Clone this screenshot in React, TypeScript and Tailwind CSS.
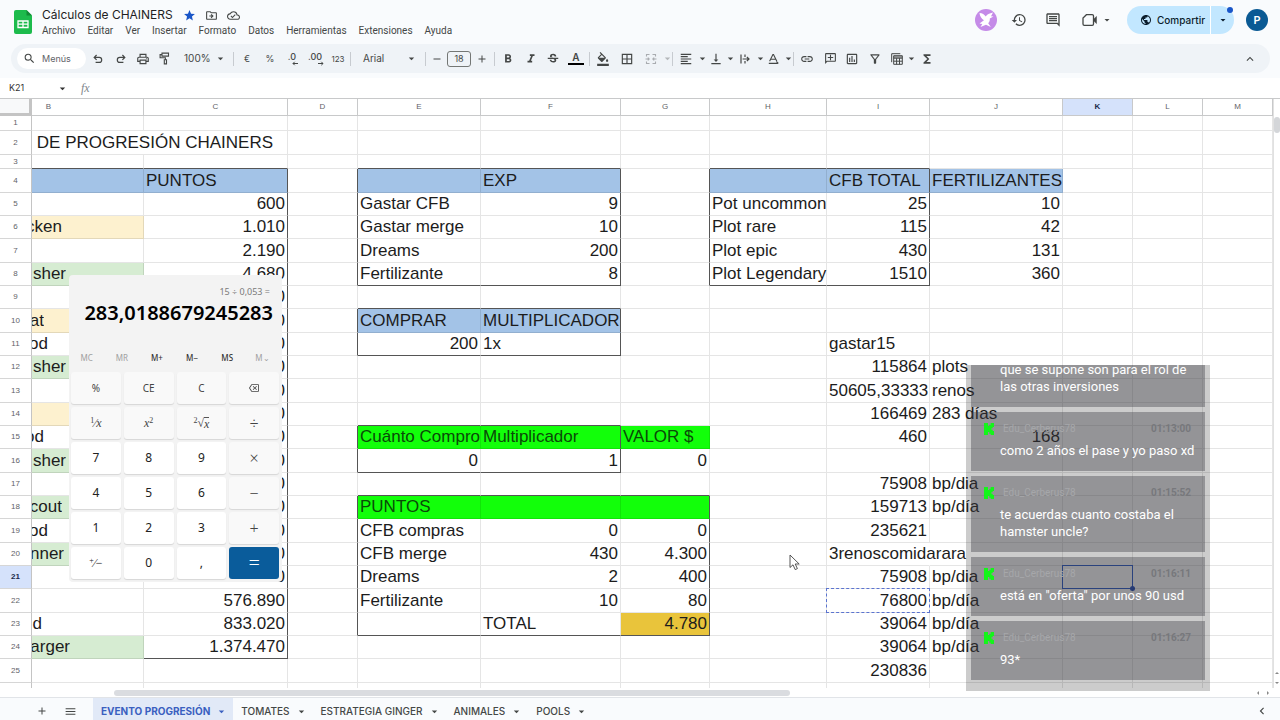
import { type ReactNode } from "react";
import {
  MdSearch, MdOutlinePrint, MdFormatBold, MdFormatItalic, MdStrikethroughS, MdFormatColorFill,
  MdBorderAll, MdFormatAlignLeft, MdVerticalAlignBottom, MdLink, MdOutlineAddComment,
  MdOutlineInsertChart, MdFunctions, MdHistory, MdOutlineComment, MdPublic,
  MdStar, MdOutlineDriveFileMove, MdOutlineCloudDone, MdArrowDropDown, MdAdd, MdRemove, MdMenu,
  MdKeyboardArrowUp, MdKeyboardArrowLeft, MdOutlineFilterAlt, MdOutlineBackspace,
} from "react-icons/md";

const COLS = ["B", "C", "D", "E", "F", "G", "H", "I", "J", "K", "L", "M"];
const COL_W = [
  "w-[112px]", "w-[144px]", "w-[70px]", "w-[123px]", "w-[140px]", "w-[89px]",
  "w-[117px]", "w-[103px]", "w-[133px]", "w-[70px]", "w-[70px]", "",
];
const ROWS = Array.from({ length: 26 }, (_, i) => i + 1);

const rowHeight = (n: number) =>
  n === 1 ? "h-[15px]" : n === 3 ? "h-[14px]" : n === 2 || n % 3 === 1 ? "h-[24px]" : "h-[23px]";

/* Text that starts with "<" is left aligned, everything else sits on the right */
const CELLS: Record<string, string> = {
  C4: "<PUNTOS", C5: "600", C6: "1.010", C7: "2.190", C8: "4.680",
  C9: "0", C10: "0", C11: "0", C12: "0", C13: "0", C14: "0", C15: "0", C16: "0",
  C17: "0", C18: "0", C19: "0", C20: "0", C21: "0",
  C22: "576.890", C23: "833.020", C24: "1.374.470",
  F4: "<EXP", E5: "<Gastar CFB", F5: "9", E6: "<Gastar merge", F6: "10",
  E7: "<Dreams", F7: "200", E8: "<Fertilizante", F8: "8",
  E10: "<COMPRAR", F10: "<MULTIPLICADOR", E11: "200", F11: "<1x",
  E15: "<Cuánto Compro", F15: "<Multiplicador", G15: "<VALOR $", E16: "0", F16: "1", G16: "0",
  E18: "<PUNTOS", E19: "<CFB compras", F19: "0", G19: "0", E20: "<CFB merge", F20: "430", G20: "4.300",
  E21: "<Dreams", F21: "2", G21: "400", E22: "<Fertilizante", F22: "10", G22: "80",
  F23: "<TOTAL", G23: "4.780",
  I4: "<CFB TOTAL", J4: "<FERTILIZANTES", H5: "<Pot uncommon", I5: "25", J5: "10",
  H6: "<Plot rare", I6: "115", J6: "42", H7: "<Plot epic", I7: "430", J7: "131",
  H8: "<Plot Legendary", I8: "1510", J8: "360",
  I11: "<gastar15", I12: "115864", J12: "<plots", I13: "50605,33333", J13: "<renos",
  I14: "166469", J14: "<283 días", I15: "460", J15: "168",
  I17: "75908", J17: "<bp/dia", I18: "159713", J18: "<bp/día", I19: "235621",
  I20: "<3renoscomidarara", I21: "75908", J21: "<bp/dia", I22: "76800", J22: "<bp/día",
  I23: "39064", J23: "<bp/día", I24: "39064", J24: "<bp/día", I25: "230836",
};

/* Column B is scrolled under the row headers: text and the width still in view */
const TAILS: Record<number, [string, string]> = {
  6: ["cken", "w-[30px]"], 8: ["sher", "w-[34px]"], 10: ["at", "w-[12px]"], 11: ["od", "w-[16px]"],
  12: ["sher", "w-[34px]"], 15: ["od", "w-[12px]"], 16: ["sher", "w-[34px]"], 18: ["cout", "w-[30px]"],
  19: ["od", "w-[16px]"], 20: ["nner", "w-[32px]"], 23: ["d", "w-[10px]"], 24: ["arger", "w-[38px]"],
};

const inRanges = (ranges: string[], col: string, row: number) =>
  ranges.some((r) => {
    const m = /^([A-Z])(\d+):([A-Z])(\d+)$/.exec(r)!;
    return col >= m[1] && col <= m[3] && row >= +m[2] && row <= +m[4];
  });

const DARK_RIGHT = [
  "C4:C24", "D4:D8", "F4:F8", "D10:D11", "F10:F11", "D15:D16", "F15:F16",
  "D18:D23", "G18:G23", "G4:G8", "I4:I8",
];
const DARK_BOTTOM = [
  "B3:C3", "C24:C24", "E3:F3", "E8:F8", "E9:F9", "E11:F11", "E14:F14", "E16:F16",
  "E17:G17", "E23:G23", "H3:I3", "H8:I8",
];
const FILLS: [string, string[]][] = [
  ["bg-[#a3c3e7]", ["B4:C4", "E4:F4", "H4:J4", "E10:F10"]],
  ["bg-[#12ff0a] text-[#0a4a08]", ["E15:G15", "E18:G18"]],
  ["bg-[#e9c43b]", ["G23:G23"]],
  ["bg-[#fdf1cf]", ["B6:B6", "B10:B10", "B14:B14"]],
  ["bg-[#d6ecd2]", ["B8:B8", "B12:B12", "B16:B16", "B18:B18", "B20:B20", "B24:B24"]],
];

function Cell({ col, row }: { col: string; row: number }) {
  if (row === 2 && col === "C") return null;
  const raw = CELLS[col + row] ?? "";
  const left = raw.startsWith("<");
  const fill = FILLS.find(([, r]) => inRanges(r, col, row))?.[0] ?? "";
  const right = inRanges(DARK_RIGHT, col, row)
    ? "border-r-[#555]"
    : col + row === "I20" ? "border-r-transparent" : "border-r-black/10";
  const bottom = inRanges(DARK_BOTTOM, col, row) ? "border-b-[#555]" : "border-b-black/10";
  const base = `relative whitespace-nowrap border-r border-b p-0 ${right} ${bottom} ${fill}`;

  if (row === 2 && col === "B")
    return (
      <td colSpan={2} className={base}>
        <div className="flex justify-end overflow-hidden pr-[14px]">S DE PROGRESIÓN CHAINERS</div>
      </td>
    );
  if (col === "B" && TAILS[row]) {
    const [text, width] = TAILS[row];
    return (
      <td className={base}>
        <div className={`flex justify-end overflow-hidden ${width}`}>{text}</div>
      </td>
    );
  }
  return (
    <td className={`${base} ${left ? "text-left" : "text-right"}`}>
      {raw && <div className="px-[2px]">{left ? raw.slice(1) : raw}</div>}
      {col + row === "K21" && (
        <>
          <span className="absolute -inset-px border border-[#2456c8]" />
          <span className="absolute -right-[3px] -bottom-[3px] size-[5px] rounded-full bg-[#1b46b8]" />
        </>
      )}
      {col + row === "I22" && <span className="absolute -inset-px border border-dashed border-[#5b74d0]" />}
    </td>
  );
}

function Grid() {
  return (
    <table className="w-full table-fixed border-separate border-spacing-0 text-[17px] leading-[20px] text-[#1c1c1c]">
      <colgroup>
        <col className="w-8" />
        {COLS.map((c, i) => <col key={c} className={COL_W[i]} />)}
      </colgroup>
      <thead>
        <tr className="h-[17px] text-[8px] leading-[10px] text-[#5f6368]">
          <th className="border-r-3 border-b-3 border-[#c4c4c4] bg-[#f8f9fa] p-0" aria-label="Seleccionar todo" />
          {COLS.map((c, i) => (
            <th
              key={c}
              className={`border-r border-b border-[#c8c9ca] p-0 text-center ${i === 0 ? "pr-[78px]" : ""} ${
                c === "K" ? "bg-[#d5e2fb] font-bold text-[#1b2b4a]" : "font-normal"
              }`}
            >
              {c}
            </th>
          ))}
        </tr>
      </thead>
      <tbody>
        {ROWS.map((r) => (
          <tr key={r} className={rowHeight(r)}>
            <th
              className={`border-r border-b border-r-[#c4c4c4] border-b-[#d6d6d6] p-0 text-center text-[8px] leading-[10px] ${
                r === 21 ? "bg-[#d5e2fb] font-bold text-[#1b2b4a]" : "font-normal text-[#5f6368]"
              }`}
            >
              {r}
            </th>
            {COLS.map((c) => <Cell key={c} col={c} row={r} />)}
          </tr>
        ))}
      </tbody>
    </table>
  );
}

function Tool({ w = "w-[22px]", label, children, className = "" }: {
  w?: string; label: string; children: ReactNode; className?: string;
}) {
  return (
    <button aria-label={label} className={`flex h-5 shrink-0 items-center justify-center ${w} ${className}`}>
      {children}
    </button>
  );
}

const Sep = () => <span className="mx-px h-[14px] w-px shrink-0 bg-[#c7cbd0]" />;
const Caret = ({ label, w = "w-2", dim = false }: { label: string; w?: string; dim?: boolean }) => (
  <Tool w={w} label={label} className={dim ? "text-[#b4b7ba]" : ""}>
    <MdArrowDropDown className="size-[13px] shrink-0" />
  </Tool>
);

const UndoIcon = ({ className = "" }: { className?: string }) => (
  <svg viewBox="0 0 12 12" className={`size-3 ${className}`} fill="none" stroke="currentColor" strokeWidth="1.2">
    <path d="M4.6 2 2.2 4.4l2.4 2.4M2.4 4.4h4.8a2.5 2.5 0 0 1 0 5H3.6" />
  </svg>
);
const RollerIcon = () => (
  <svg viewBox="0 0 12 13" className="h-[13px] w-3" fill="none" stroke="currentColor" strokeWidth="1.1">
    <path d="M3 1.1h6.5v3H3zM3 2.6H1.1v3.2h5.3v1.8M5.3 7.7h2.2v4.2H5.3z" />
  </svg>
);
const DecimalIcon = ({ text, add }: { text: string; add?: boolean }) => (
  <span className="relative flex h-[14px] flex-col items-center text-[9px] leading-[10px] font-medium">
    {text}
    <svg viewBox="0 0 6 5" className="absolute right-[-2px] bottom-0 h-[5px] w-[6px]" fill="none" stroke="currentColor">
      <path d={add ? "M0 2.5h5M3.3.8 5 2.5 3.3 4.2" : "M6 2.5H1M2.7.8 1 2.5l1.7 1.7"} />
    </svg>
  </span>
);
const MergeIcon = () => (
  <svg viewBox="0 0 12 12" className="size-3 text-[#a9acb0]" fill="none" stroke="currentColor" strokeWidth="1.1">
    <path d="M4.5 1.5h-3v2M7.5 1.5h3v2M4.5 10.5h-3v-2M7.5 10.5h3v-2M.5 6H4M2.8 4.6 4.2 6 2.8 7.4M11.5 6H8M9.2 4.6 7.8 6l1.4 1.4" />
  </svg>
);
const WrapIcon = () => (
  <svg viewBox="0 0 12 12" className="size-3" fill="none" stroke="currentColor" strokeWidth="1.2">
    <path d="M2 1.5v9M6 1.5v2.6M6 7.9v2.6M3.6 6h6M7.9 4 10 6 7.9 8" />
  </svg>
);
const RotateIcon = () => (
  <svg viewBox="0 0 12 12" className="size-3" fill="none" stroke="currentColor" strokeWidth="1.1">
    <path d="M1.6 8.3 4.9 1.6h.6l3.3 6.7M2.8 6.2h4.8M.8 10.4h9M8.5 8.6l1.9 1.8" />
  </svg>
);
const TableIcon = () => (
  <svg viewBox="0 0 12 12" className="size-3" fill="none" stroke="currentColor">
    <path d="M.7 9.2V.7h8.6M2.7 2.7h8.6v8.6H2.7zM2.7 4h8.6M2.7 5.2h8.6M2.7 8.2h8.6M5.6 5.2v6.1M8.5 5.2v6.1" />
  </svg>
);
const VideoIcon = () => (
  <svg viewBox="0 0 16 14" className="h-[14px] w-4" fill="none" stroke="currentColor" strokeWidth="1.3">
    <path d="M4.400 1.700h5.800a1.300 1.300 0 0 1 1.300 1.300v8a1.300 1.300 0 0 1-1.300 1.300H2.300A1.300 1.300 0 0 1 1 11V5.100z" />
    <path d="m11.800 6 2.700-2.600v7.200L11.800 8z" fill="currentColor" strokeWidth="0.500" />
  </svg>
);
const SheetsLogo = () => (
  <svg viewBox="0 0 18 24" className="h-6 w-[18px]">
    <path d="M2 0h10.5L18 5.5V22a2 2 0 0 1-2 2H2a2 2 0 0 1-2-2V2a2 2 0 0 1 2-2z" fill="#1dbb4c" />
    <path d="M12.5 0 18 5.5h-5.5z" fill="#128a35" />
    <path d="M4 11h10v6.5H4zM4 14.2h10M9 11v6.5" fill="none" stroke="#fff" strokeWidth="1.3" />
  </svg>
);
const BirdAvatar = () => (
  <svg viewBox="0 0 22 22" className="size-[22px]">
    <circle cx="11" cy="11" r="11" fill="#c58be8" />
    <path d="M4.500 4c2.800.2 5 1.500 6.300 3.600 1.200-2.200 3.600-2.900 7.200-4l-2 3.600 2.500.3-3.700 2.100c.2 2.200-.5 3.600-1.600 4.700l2.600 3.700-4.800-2.300-5.500 2.300 1.800-3-2.800-.5 4.500-3.300C6.500 9.700 4.800 7.300 4.500 4z" fill="#fff" />
  </svg>
);

const MENUS = ["Archivo", "Editar", "Ver", "Insertar", "Formato", "Datos", "Herramientas", "Extensiones", "Ayuda"];

function Header() {
  return (
    <header className="flex h-11 shrink-0 items-start pr-3 pl-[14px] text-[#444746]">
      <a href="#inicio" aria-label="Hojas de cálculo" className="mt-[10px]"><SheetsLogo /></a>
      <div className="ml-[10px] flex-1 pt-[7px]">
        <div className="flex h-4 items-center">
          <h1 className="text-[12px] leading-4 text-[#1f1f1f]">Cálculos de CHAINERS</h1>
          <button aria-label="Destacar" className="ml-[10px]"><MdStar className="size-[13px] text-[#1a56c8]" /></button>
          <button aria-label="Mover" className="ml-[9px]"><MdOutlineDriveFileMove className="size-[13px]" /></button>
          <button aria-label="Guardado" className="ml-[9px]"><MdOutlineCloudDone className="size-[13px]" /></button>
        </div>
        <nav className="flex h-4 items-center gap-3 font-[Roboto,sans-serif] text-[10px] leading-4">
          {MENUS.map((m) => <button key={m}>{m}</button>)}
        </nav>
      </div>
      <div className="flex h-10 items-center">
        <button aria-label="Colaborador"><BirdAvatar /></button>
        <button aria-label="Historial" className="flex w-11 justify-center"><MdHistory className="size-4" /></button>
        <button aria-label="Comentarios" className="flex w-6 justify-center"><MdOutlineComment className="size-4" /></button>
        <button aria-label="Videollamada" className="flex w-[48px] items-center justify-end gap-[3px]">
          <VideoIcon />
          <MdArrowDropDown className="size-3" />
        </button>
        <div className="relative ml-[14px] flex h-7 overflow-visible rounded-full bg-[#c2e7ff] text-[#0b1d2c]">
          <button className="flex w-[83px] items-center gap-[5px] pl-[13px] text-[10px] font-medium">
            <MdPublic className="size-3 shrink-0" />Compartir
          </button>
          <button aria-label="Opciones para compartir" className="flex w-6 items-center justify-center border-l border-white">
            <MdArrowDropDown className="size-3" />
          </button>
          <span className="absolute top-px right-px size-[6px] rounded-full bg-[#1a56c8]" />
        </div>
        <button className="ml-3 size-[22px] rounded-full bg-[#0b5a94] text-[11px] font-semibold text-white">P</button>
      </div>
    </header>
  );
}

function Toolbar() {
  const i = "size-[14px]";
  return (
    <div className="mr-[10px] mb-[5px] ml-[11px] flex h-[29px] shrink-0 items-center rounded-full bg-[#eff3f7] pl-[6px] text-[9px] text-[#444746]">
      <label className="flex h-[21px] w-[69px] shrink-0 items-center gap-[6px] rounded-full bg-white pl-[6px]">
        <MdSearch className="size-[13px] shrink-0" />
        <input aria-label="Menús" placeholder="Menús" className="w-9 outline-none placeholder:text-[#5f6368]" />
      </label>
      <Tool w="w-6" label="Deshacer"><UndoIcon /></Tool>
      <Tool label="Rehacer"><UndoIcon className="-scale-x-100" /></Tool>
      <Tool label="Imprimir"><MdOutlinePrint className={i} /></Tool>
      <Tool label="Copiar formato"><RollerIcon /></Tool>
      <button className="flex w-14 shrink-0 items-center justify-between pr-[5px] pl-2 text-[10px]">
        100%<MdArrowDropDown className="size-[13px]" />
      </button>
      <Sep />
      <Tool w="w-6" label="Moneda">€</Tool>
      <Tool label="Porcentaje">%</Tool>
      <Tool label="Menos decimales"><DecimalIcon text=".0" /></Tool>
      <Tool w="w-6" label="Más decimales"><DecimalIcon text=".00" add /></Tool>
      <Tool label="Más formatos" className="text-[8px]">123</Tool>
      <Sep />
      <button className="flex w-[72px] shrink-0 items-center justify-between pr-[6px] pl-[11px] text-[10px]">
        Arial<MdArrowDropDown className="size-[13px]" />
      </button>
      <Sep />
      <Tool w="w-5" label="Reducir"><MdRemove className="size-3" /></Tool>
      <input
        aria-label="Tamaño de fuente"
        defaultValue="18"
        className="h-4 w-6 shrink-0 rounded-[3px] border border-[#747775] text-center text-[9px] outline-none"
      />
      <Tool label="Aumentar"><MdAdd className="size-3" /></Tool>
      <Sep />
      <Tool w="w-6" label="Negrita"><MdFormatBold className={i} /></Tool>
      <Tool label="Cursiva"><MdFormatItalic className={i} /></Tool>
      <Tool label="Tachado"><MdStrikethroughS className={i} /></Tool>
      <Tool w="w-6" label="Color del texto">
        <span className="flex w-4 flex-col items-center border-b-2 border-black text-[10px] leading-[11px] font-semibold">A</span>
      </Tool>
      <Sep />
      <Tool w="w-6" label="Color de relleno"><MdFormatColorFill className={i} /></Tool>
      <Tool w="w-6" label="Bordes"><MdBorderAll className={i} /></Tool>
      <Tool w="w-6" label="Combinar celdas"><MergeIcon /></Tool>
      <Caret label="Opciones de combinar" dim />
      <Sep />
      <Tool w="w-6" label="Alineación horizontal"><MdFormatAlignLeft className={i} /></Tool>
      <Caret label="Opciones de alineación" />
      <Tool w="w-5" label="Alineación vertical"><MdVerticalAlignBottom className={i} /></Tool>
      <Caret label="Opciones de alineación vertical" />
      <Tool label="Ajuste de texto"><WrapIcon /></Tool>
      <Caret label="Opciones de ajuste" />
      <Tool w="w-5" label="Rotación de texto"><RotateIcon /></Tool>
      <Caret label="Opciones de rotación" />
      <Sep />
      <Tool w="w-6" label="Insertar enlace"><MdLink className={i} /></Tool>
      <Tool label="Insertar comentario"><MdOutlineAddComment className="size-[13px] -scale-x-100" /></Tool>
      <Tool label="Insertar gráfico"><MdOutlineInsertChart className={i} /></Tool>
      <Tool w="w-6" label="Crear filtro"><MdOutlineFilterAlt className={i} /></Tool>
      <Tool w="w-5" label="Vistas de tabla"><TableIcon /></Tool>
      <Caret label="Opciones de tabla" />
      <Tool w="w-6" label="Funciones"><MdFunctions className={i} /></Tool>
      <Tool label="Ocultar menús" className="mr-[9px] ml-auto"><MdKeyboardArrowUp className="size-[14px]" /></Tool>
    </div>
  );
}

const SHEETS = ["EVENTO PROGRESIÓN", "TOMATES", "ESTRATEGIA GINGER", "ANIMALES", "POOLS"];

function SheetTabs() {
  return (
    <footer className="flex h-[23px] shrink-0 items-stretch border-t border-[#e1e4e8] bg-[#f9fbfd] text-[10px] font-medium text-[#444746]">
      <button aria-label="Añadir hoja" className="ml-7 flex w-7 items-center justify-center pt-1"><MdAdd className="size-3" /></button>
      <button aria-label="Todas las hojas" className="mr-[9px] flex w-7 items-center justify-center pt-1"><MdMenu className="size-[13px]" /></button>
      {SHEETS.map((s, i) => (
        <button
          key={s}
          className={`flex items-center gap-[5px] pt-1 pr-[5px] pl-2 ${i === 0 ? "bg-[#e1e9f7] font-bold text-[#3a5fc0]" : ""}`}
        >
          {s}<MdArrowDropDown className="size-[13px]" />
        </button>
      ))}
      <button aria-label="Panel lateral" className="mr-[11px] ml-auto pt-1"><MdKeyboardArrowLeft className="size-[14px]" /></button>
    </footer>
  );
}

const Serif = ({ children }: { children: ReactNode }) => (
  <span className="flex items-start font-['Liberation_Serif',serif] text-[12px] leading-[12px]">{children}</span>
);
const Small = ({ children }: { children: ReactNode }) => <span className="text-[8px] leading-[8px]">{children}</span>;

type Key = { id: string; face: ReactNode; kind?: "num" | "eq" };
const KEYS: Key[] = [
  { id: "%", face: "%" }, { id: "CE", face: "CE" }, { id: "C", face: "C" },
  { id: "Borrar", face: <MdOutlineBackspace className="size-[10px]" /> },
  { id: "Inverso", face: <Serif><Small>1</Small>⁄<i>x</i></Serif> },
  { id: "Cuadrado", face: <Serif><i>x</i><Small>2</Small></Serif> },
  { id: "Raíz", face: <Serif><Small>2</Small>√<i className="border-t border-[#555]">x</i></Serif> },
  { id: "Dividir", face: "÷" },
  { id: "7", face: "7", kind: "num" }, { id: "8", face: "8", kind: "num" }, { id: "9", face: "9", kind: "num" }, { id: "Multiplicar", face: "×" },
  { id: "4", face: "4", kind: "num" }, { id: "5", face: "5", kind: "num" }, { id: "6", face: "6", kind: "num" }, { id: "Restar", face: "−" },
  { id: "1", face: "1", kind: "num" }, { id: "2", face: "2", kind: "num" }, { id: "3", face: "3", kind: "num" }, { id: "Sumar", face: "+" },
  { id: "Signo", face: <Serif><Small>+</Small>⁄−</Serif>, kind: "num" }, { id: "0", face: "0", kind: "num" }, { id: "Coma", face: ",", kind: "num" }, { id: "Igual", face: "=", kind: "eq" },
];

const keyStyle = (k: Key) => {
  if (k.kind === "eq") return "bg-[#0a5c9b] text-[20px] font-light text-white";
  if (k.kind === "num") return "bg-white text-[12px] text-[#222] shadow-[0_1px_1px_rgba(0,0,0,0.12)]";
  if (k.id.length > 2) return "bg-[#f9f9f9] text-[16px] font-light text-[#444] shadow-[0_1px_1px_rgba(0,0,0,0.12)]";
  return "bg-[#f9f9f9] text-[10px] text-[#444] shadow-[0_1px_1px_rgba(0,0,0,0.12)]";
};

function Calculator() {
  return (
    <section
      aria-label="Calculadora"
      className="absolute top-[275px] left-[69px] w-[213px] rounded-[4px] bg-[#f3f3f3] pb-[3px] font-['Noto_Sans',sans-serif]"
    >
      <p className="pt-[10px] pr-3 text-right text-[9px] leading-[13px] text-[#7a7a7a]">15 ÷ 0,053 =</p>
      <p className="pr-[9px] text-right text-[20px] leading-[30px] font-semibold text-black">283,0188679245283</p>
      <div className="mt-[22px] grid h-[16px] grid-cols-6 items-center pr-[2px] text-[8px] text-[#333]">
        {["MC", "MR", "M+", "M−", "MS", "M⌄"].map((m) => (
          <button key={m} disabled={["MC", "MR", "M⌄"].includes(m)} className="font-medium disabled:font-normal disabled:text-[#a0a0a0]">{m}</button>
        ))}
      </div>
      <div className="mt-[6px] grid grid-cols-4 gap-x-[3px] gap-y-[3px] pr-[3px] pl-[2px]">
        {KEYS.map((k) => (
          <button
            key={k.id}
            aria-label={k.id}
            className={`flex h-8 items-center justify-center rounded-[3px] leading-none ${keyStyle(k)}`}
          >
            {k.face}
          </button>
        ))}
      </div>
    </section>
  );
}

const KickIcon = () => (
  <svg viewBox="0 0 12 12" className="size-3 shrink-0">
    <path d="M1 0h4v3h1.300V1.700h1.400V0H11v4H9.700v1.300H8.400v1.400h1.300V8H11v4H7.700v-1.300H6.300V9H5v3H1z" fill="#14f51a" />
  </svg>
);

const MESSAGES = [
  { user: "Edu_Cerberus78", time: "01:13:00", text: "como 2 años el pase y yo paso xd" },
  { user: "Edu_Cerberus78", time: "01:15:52", text: "te acuerdas cuanto costaba el hamster uncle?" },
  { user: "Edu_Cerberus78", time: "01:16:11", text: 'está en "oferta" por unos 90 usd' },
  { user: "Edu_Cerberus78", time: "01:16:27", text: "93*" },
];

function Chat() {
  return (
    <aside className="absolute top-[365px] left-[966px] flex h-[326px] w-[244px] flex-col justify-end gap-[5px] overflow-hidden bg-black/20 px-[5px] pb-[11px] font-[Roboto,sans-serif] text-[13px] leading-[17px] text-white">
      <article className="shrink-0 bg-[#404248]/40 pr-4 pb-3 pl-[29px]">que se supone son para el rol de las otras inversiones</article>
      {MESSAGES.map((m) => (
        <article key={m.time} className="shrink-0 bg-[#404248]/40 pt-[9px] pb-3">
          <div className="flex h-[21px] items-start pr-[14px] pl-3 leading-4">
            <span className="pt-[2px]"><KickIcon /></span>
            <span className="ml-2 text-[10px] text-[#a6a7aa]">{m.user}</span>
            <time className="ml-auto text-[10px] font-bold text-[#77787c]">{m.time}</time>
          </div>
          <p className="pr-1 pl-[29px]">{m.text}</p>
        </article>
      ))}
    </aside>
  );
}

export default function App() {
  return (
    <div className="relative flex h-screen flex-col overflow-hidden bg-[#f9fbfd] font-[Inter,sans-serif]">
      <Header />
      <Toolbar />
      <div className="flex h-5 shrink-0 items-center bg-white text-[9px] text-[#333]">
        <input aria-label="Cuadro de nombres" defaultValue="K21" className="w-12 pl-[9px] outline-none" />
        <button aria-label="Rangos con nombre" className="ml-2"><MdArrowDropDown className="size-[13px]" /></button>
        <span className="ml-3 font-['Liberation_Serif',serif] text-[12px] text-[#80868b] italic">fx</span>
        <input aria-label="Barra de fórmulas" className="ml-2 flex-1 outline-none" />
      </div>
      <main className="flex min-h-0 flex-1 border-t border-[#c8c9ca] bg-white font-['Liberation_Sans',Arial,sans-serif]">
        <div className="min-w-0 flex-1 overflow-hidden"><Grid /></div>
        <div className="flex w-[7px] shrink-0 flex-col items-center border-l border-[#e1e1e1] pt-[18px] text-[#777]">
          <span className="h-4 w-[6px] rounded-full bg-[#d4d6d9]" />
          <span className="mt-auto mb-2 border-x-2 border-b-2 border-x-transparent border-b-[#888]" />
          <span className="mb-1 border-x-2 border-t-2 border-x-transparent border-t-[#888]" />
        </div>
      </main>
      <div className="flex h-[9px] shrink-0 items-center bg-white pl-[114px]">
        <span className="h-[6px] w-[58%] rounded-full bg-[#dadce0]" />
        <span className="mr-2 ml-auto border-y-2 border-r-2 border-y-transparent border-r-[#888]" />
        <span className="mr-[11px] border-y-2 border-l-2 border-y-transparent border-l-[#888]" />
      </div>
      <SheetTabs />
      <Calculator />
      <Chat />
      <svg viewBox="0 0 12 18" className="absolute top-[554px] left-[789px] h-[18px] w-3">
        <path d="M1 1v12.500l3-2.700 2.200 4.800 2.200-1-2.200-4.600h4z" fill="#fff" stroke="#444" strokeWidth="0.900" />
      </svg>
    </div>
  );
}
